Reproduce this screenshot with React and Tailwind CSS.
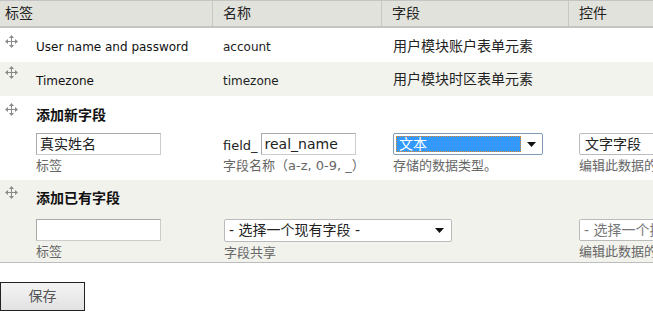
import React from "react";

const ui = { fontFamily: '"DejaVu Sans", Verdana, "Noto Sans CJK SC", sans-serif' };

function DragHandle() {
  return (
    <svg width="13" height="13" viewBox="0 0 13 13" className="shrink-0 text-[#8a8a8a]">
      <g fill="currentColor">
        <rect x="6" y="1" width="1" height="11" />
        <rect x="1" y="6" width="11" height="1" />
        <path d="M6.5 0 L9 3 H4 Z" />
        <path d="M6.5 13 L9 10 H4 Z" />
        <path d="M0 6.5 L3 4 V9 Z" />
        <path d="M13 6.5 L10 4 V9 Z" />
      </g>
    </svg>
  );
}

function Caret() {
  return (
    <svg width="9" height="5" viewBox="0 0 9 5" className="shrink-0">
      <path d="M0 0 H9 L4.5 5 Z" fill="#111" />
    </svg>
  );
}

function Hint({ children }) {
  return <div className="mt-[2px] text-[13px] leading-[18px] text-[#666] whitespace-nowrap">{children}</div>;
}

function TextInput({ value, className = "" }) {
  return (
    <div
      className={
        "h-[22px] border border-[#aaa] border-r-[#ccc] border-b-[#ccc] bg-white px-[3px] text-[14px] leading-[20px] text-[#222] whitespace-nowrap overflow-hidden " +
        className
      }
    >
      {value}
    </div>
  );
}

export default function App() {
  return (
    <div className="w-[653px] h-[314px] overflow-hidden bg-white text-[#222]" style={ui}>
      <div className="w-[800px]">
        {/* header */}
        <div className="flex h-[28px] border-t border-b-2 border-t-[#c4c4c4] border-b-[#c4c4c4] bg-[#e2e2dc] text-[14px] leading-[25px]">
          <div className="w-[213px] pl-[5px] border-r border-[#c8c8c2]">标签</div>
          <div className="w-[169px] pl-[10px] border-r border-[#c8c8c2]">名称</div>
          <div className="w-[187px] pl-[10px] border-r border-[#c8c8c2]">字段</div>
          <div className="flex-1 pl-[10px]">控件</div>
        </div>

        {/* row 1 */}
        <div className="flex h-[34px] bg-white text-[12px]">
          <div className="w-[213px] flex pl-[5px] pt-[7px]">
            <DragHandle />
            <span className="ml-[18px] mt-[3px] text-[#111]">User name and password</span>
          </div>
          <div className="w-[169px] pl-[10px] pt-[10px]">account</div>
          <div className="w-[187px] pl-[11px] pt-[8px] text-[14px]">用户模块账户表单元素</div>
          <div className="flex-1" />
        </div>

        {/* row 2 */}
        <div className="flex h-[34px] bg-[#f3f3ee] text-[12px]">
          <div className="w-[213px] flex pl-[5px] pt-[4px]">
            <DragHandle />
            <span className="ml-[18px] mt-[6px] text-[#111]">Timezone</span>
          </div>
          <div className="w-[169px] pl-[10px] pt-[10px]">timezone</div>
          <div className="w-[187px] pl-[11px] pt-[7px] text-[14px]">用户模块时区表单元素</div>
          <div className="flex-1" />
        </div>

        {/* add new field */}
        <div className="h-[84px] bg-white pt-[7px]">
          <div className="flex pl-[5px]">
            <DragHandle />
            <span className="ml-[18px] mt-[3px] text-[14px] font-bold text-[#111] leading-[18px]">添加新字段</span>
          </div>
          <div className="flex mt-[9px]">
            <div className="w-[213px] pl-[36px]">
              <TextInput value="真实姓名" className="w-[125px]" />
              <Hint>标签</Hint>
            </div>
            <div className="w-[169px] pl-[10px]">
              <div className="flex items-end">
                <span className="text-[13px] leading-[16px] mb-[1px]">field_</span>
                <TextInput value="real_name" className="ml-[3px] w-[95px] text-[13px]" />
              </div>
              <Hint>字段名称（a-z, 0-9, _）</Hint>
            </div>
            <div className="w-[187px] pl-[11px]">
              <div className="flex h-[22px] w-[150px] items-center border border-[#7f9db9] bg-white pl-[2px] pr-[6px] rounded-[2px]">
                <div className="h-[16px] flex-1 bg-[#3399ff] border border-dotted border-[#e08a2a] text-white text-[14px] leading-[14px] px-[2px]">
                  文本
                </div>
                <div className="ml-[6px]">
                  <Caret />
                </div>
              </div>
              <Hint>存储的数据类型。</Hint>
            </div>
            <div className="flex-1 pl-[10px]">
              <div className="flex h-[22px] w-[160px] items-center border border-[#bbb] bg-white pl-[5px] rounded-[2px] text-[14px]">
                文字字段
              </div>
              <Hint>编辑此数据的控件</Hint>
            </div>
          </div>
        </div>

        {/* add existing field */}
        <div className="h-[83px] bg-[#f2f2ed] border-b border-[#bdbdbd] pt-[6px]">
          <div className="flex pl-[5px]">
            <DragHandle />
            <span className="ml-[18px] mt-[3px] text-[14px] font-bold text-[#111] leading-[18px]">添加已有字段</span>
          </div>
          <div className="flex mt-[12px]">
            <div className="w-[213px] pl-[36px]">
              <TextInput value="" className="w-[125px]" />
              <Hint>标签</Hint>
            </div>
            <div className="w-[356px] pl-[11px]">
              <div className="flex h-[23px] w-[228px] items-center border border-[#bbb] bg-white pl-[4px] pr-[7px] rounded-[2px] text-[14px] whitespace-nowrap">
                <span className="flex-1">- 选择一个现有字段 -</span>
                <Caret />
              </div>
              <Hint>字段共享</Hint>
            </div>
            <div className="flex-1 pl-[10px]">
              <div className="flex h-[22px] w-[160px] items-center border border-[#bbb] bg-white pl-[4px] rounded-[2px] text-[14px] text-[#777] whitespace-nowrap">
                - 选择一个控件 -
              </div>
              <Hint>编辑此数据的控件</Hint>
            </div>
          </div>
        </div>

        <div className="pt-[19px]">
          <button className="h-[29px] w-[85px] border border-[#222] bg-gradient-to-b from-[#f4f4f4] to-[#e2e2e2] text-[14px] text-[#555]">
            保存
          </button>
        </div>
      </div>
    </div>
  );
}
